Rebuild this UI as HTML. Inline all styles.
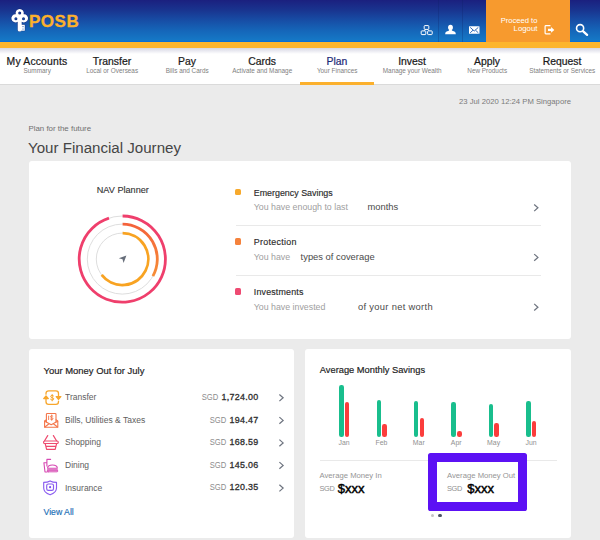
<!DOCTYPE html>
<html>
<head>
<meta charset="utf-8">
<title>POSB - Plan</title>
<style>
*{box-sizing:border-box;margin:0;padding:0}
html,body{width:600px;height:540px;overflow:hidden}
body{font-family:"Liberation Sans",sans-serif;background:#ebebeb;position:relative;color:#333}
.abs{position:absolute}
.t{position:absolute;white-space:nowrap;line-height:1}
svg{position:absolute;overflow:visible}
#hdr{left:0;top:0;width:600px;height:42px;background:linear-gradient(#1b207f 0%,#19348f 24%,#174da5 48%,#1565b8 72%,#1578c6 96%,#0b6ed6 98%,#0b6ed6 100%)}
#ybar{left:0;top:41.6px;width:600px;height:6px;background:#fdb52e}
#logout{left:486.4px;top:0;width:83.2px;height:41.5px;background:#f79a2e}
.hdiv{position:absolute;top:0;width:1px;height:41.5px;background:rgba(12,30,100,.25)}
#nav{left:0;top:47.5px;width:600px;height:36.6px;background:#fff;box-shadow:0 .8px .6px rgba(0,0,0,.07)}
#navsh{left:0;top:47.5px;width:600px;height:6px;background:linear-gradient(rgba(150,150,185,.38),rgba(255,255,255,0))}
#uline{left:300px;top:81.5px;width:74.4px;height:3.1px;background:#fbb02d}
.card{position:absolute;background:#fff;border-radius:3px}
.hr{position:absolute;height:1px;background:#e9e9e9}
.bul{position:absolute;width:5.6px;height:6.2px;border-radius:1.6px}
.bar{position:absolute;width:4.5px;border-radius:2.2px}
.g{background:#19be8d;width:4.4px}.r{background:#fb3d3c}
</style>
</head>
<body>
<div id="hdr" class="abs"></div>
<div id="ybar" class="abs"></div>
<div id="logout" class="abs"></div>
<div class="hdiv" style="left:438.2px"></div><div class="hdiv" style="left:461.8px"></div>
<svg id="key" style="left:0;top:0" width="90" height="42" viewBox="0 0 90 42">
<g fill="#fff" stroke="#121c66" stroke-width="1" stroke-opacity=".6" paint-order="stroke">
<path fill-rule="evenodd" d="M19.7 9a4.1 4.1 0 0 1 3.95 5.2a4.1 4.1 0 1 1 -1.95 7.5V24.7H24.8V30.7H21.7V30.2a2 1.2 0 0 1 -4 0V21.7a4.1 4.1 0 1 1 -1.95 -7.5a4.1 4.1 0 0 1 3.95 -5.2z
M19.7 11.5a1.5 1.5 0 1 0 0 3a1.5 1.5 0 1 0 0 -3z
M15.9 17.2a1.5 1.5 0 1 0 0 3a1.5 1.5 0 1 0 0 -3z
M23.5 17.2a1.5 1.5 0 1 0 0 3a1.5 1.5 0 1 0 0 -3z"/>
</g>
<circle cx="23" cy="26.6" r=".55" fill="#1651ad"/><circle cx="23" cy="29" r=".55" fill="#1459b4"/>
</svg>
<div class="t" style="top:12.91px;font-size:17.0px;color:#fbb02d;left:29.0px;font-weight:bold;-webkit-text-stroke:0.3px #fbb02d;letter-spacing:0.5px;">POSB</div>
<svg style="left:0;top:0" width="600" height="42" viewBox="0 0 600 42">
<g fill="none" stroke="#fff" stroke-width="1">
<rect x="424.2" y="25.6" width="4.6" height="3.8" rx=".7"/>
<rect x="421.2" y="30.9" width="4.6" height="3.7" rx=".7"/>
<rect x="427.6" y="30.9" width="4.6" height="3.7" rx=".7"/>
<path d="M425.4 29.4L424 30.9M427.6 29.4L429 30.9" stroke-width=".8"/>
</g>
<g fill="#fff">
<ellipse cx="450.5" cy="27.4" rx="2.4" ry="2.6"/>
<path d="M445.2 34.3C445.2 32.3 446 31.5 448 31C449 30.7 449.3 30.3 449.2 29.4h2.6C451.7 30.3 452 30.7 453 31C455 31.5 455.8 32.3 455.8 34.3z"/>
<rect x="469" y="26.3" width="10.5" height="7.5" rx=".5"/>
</g>
<g fill="none" stroke="#1859b0" stroke-width=".9">
<path d="M470.2 27.4L474.25 31L478.3 27.4M470.2 32.8L473 30.2M478.3 32.8L475.5 30.2"/>
</g>
<g fill="none" stroke="#fff" stroke-width="1.2">
<path d="M550 25.7H545.9A.8 .8 0 0 0 545.1 26.5V33.1A.8 .8 0 0 0 545.9 33.9H550" stroke-linecap="round"/>
</g>
<path fill="#fff" d="M548 28.8H551.1V27.1L554.3 29.9L551.1 32.7V31H548z"/>
<g fill="none" stroke="#fff">
<circle cx="580.1" cy="28.2" r="3.55" stroke-width="1.6"/>
<path d="M583.2 31.4L587.1 34.9" stroke-width="2.3" stroke-linecap="round"/>
</g>
</svg>
<div class="t" style="top:17.07px;font-size:7.6px;color:#fff;right:62.60000000000002px;">Proceed to</div>
<div class="t" style="top:25.10px;font-size:7.8px;color:#fff;right:62.60000000000002px;">Logout</div>
<div id="nav" class="abs"></div>
<div id="navsh" class="abs"></div>
<div id="uline" class="abs"></div>
<div class="t" style="top:56.60px;font-size:10.4px;color:#1a1a1a;left:-113.0px;width:300px;text-align:center;-webkit-text-stroke:0.22px #1a1a1a;letter-spacing:0.17px;">My Accounts</div>
<div class="t" style="top:68.28px;font-size:6.4px;color:#808080;left:-112.8px;width:300px;text-align:center;">Summary</div>
<div class="t" style="top:56.60px;font-size:10.4px;color:#1a1a1a;left:-38.0px;width:300px;text-align:center;-webkit-text-stroke:0.22px #1a1a1a;">Transfer</div>
<div class="t" style="top:68.28px;font-size:6.4px;color:#808080;left:-37.8px;width:300px;text-align:center;">Local or Overseas</div>
<div class="t" style="top:56.60px;font-size:10.4px;color:#1a1a1a;left:37.0px;width:300px;text-align:center;-webkit-text-stroke:0.22px #1a1a1a;">Pay</div>
<div class="t" style="top:68.28px;font-size:6.4px;color:#808080;left:37.19999999999999px;width:300px;text-align:center;">Bills and Cards</div>
<div class="t" style="top:56.60px;font-size:10.4px;color:#1a1a1a;left:112.0px;width:300px;text-align:center;-webkit-text-stroke:0.22px #1a1a1a;">Cards</div>
<div class="t" style="top:68.28px;font-size:6.4px;color:#808080;left:112.19999999999999px;width:300px;text-align:center;">Activate and Manage</div>
<div class="t" style="top:56.60px;font-size:10.4px;color:#1d2a78;left:187.0px;width:300px;text-align:center;-webkit-text-stroke:0.22px #1d2a78;">Plan</div>
<div class="t" style="top:68.28px;font-size:6.4px;color:#808080;left:187.2px;width:300px;text-align:center;">Your Finances</div>
<div class="t" style="top:56.60px;font-size:10.4px;color:#1a1a1a;left:262.0px;width:300px;text-align:center;-webkit-text-stroke:0.22px #1a1a1a;">Invest</div>
<div class="t" style="top:68.28px;font-size:6.4px;color:#808080;left:262.2px;width:300px;text-align:center;">Manage your Wealth</div>
<div class="t" style="top:56.60px;font-size:10.4px;color:#1a1a1a;left:337.0px;width:300px;text-align:center;-webkit-text-stroke:0.22px #1a1a1a;">Apply</div>
<div class="t" style="top:68.28px;font-size:6.4px;color:#808080;left:337.2px;width:300px;text-align:center;">New Products</div>
<div class="t" style="top:56.60px;font-size:10.4px;color:#1a1a1a;left:412.0px;width:300px;text-align:center;-webkit-text-stroke:0.22px #1a1a1a;">Request</div>
<div class="t" style="top:68.28px;font-size:6.4px;color:#808080;left:412.20000000000005px;width:300px;text-align:center;">Statements or Services</div>
<div class="t" style="top:98.48px;font-size:7.7px;color:#7a7a7a;right:29px;">23 Jul 2020 12:24 PM Singapore</div>
<div class="t" style="top:124.81px;font-size:7.9px;color:#707070;left:28.4px;">Plan for the future</div>
<div class="t" style="top:140.42px;font-size:15.1px;color:#454545;left:28px;">Your Financial Journey</div>
<div class="card" style="left:29px;top:161px;width:542px;height:178px"></div>
<div class="t" style="top:185.65px;font-size:9.15px;color:#333;left:-27.200000000000003px;width:300px;text-align:center;-webkit-text-stroke:0.12px #333;">NAV Planner</div>
<svg style="left:0;top:0" width="600" height="540" viewBox="0 0 600 540">
<defs><linearGradient id="mg" gradientUnits="userSpaceOnUse" x1="0" y1="-35" x2="0" y2="18"><stop offset="0" stop-color="#f4623b"/><stop offset="1" stop-color="#f68e36"/></linearGradient></defs>
<g fill="none" stroke-linecap="butt" transform="translate(122.3 259.1)">
<circle r="43.1" stroke="#dedede" stroke-width="1"/>
<circle r="35" stroke="#dedede" stroke-width="1"/>
<circle r="26" stroke="#dedede" stroke-width="1"/>
<path stroke="#ef3f6c" stroke-width="2.8" d="M0.3 -43.1A43.1 43.1 0 1 1 -13.32 -40.99"/>
<path stroke="url(#mg)" stroke-width="2.8" d="M0.3 -35A35 35 0 0 1 30.61 16.97"/>
<path stroke="#f8a322" stroke-width="2.8" d="M0.3 -26A26 26 0 1 1 -20.6 15.86"/>
</g>
<path fill="#676e7a" d="M126.4 255.5L118.8 258.3L122.5 259.3L123.6 262.9z"/>
</svg>
<div class="bul" style="left:235.3px;top:188.9px;background:#f7a92c"></div>
<div class="t" style="top:188.57px;font-size:8.9px;color:#2b2b2b;left:253.8px;-webkit-text-stroke:0.15px #2b2b2b;">Emergency Savings</div>
<div class="t" style="top:202.35px;font-size:8.8px;color:#a0a0a0;left:253.8px;"><span style="display:inline-block;width:113.7px">You have enough to last</span><span style="color:#4a4a4a;font-size:9.4px;letter-spacing:0px">months</span></div>
<div class="bul" style="left:235.3px;top:238.4px;background:#f5823c"></div>
<div class="t" style="top:238.07px;font-size:8.9px;color:#2b2b2b;left:253.8px;-webkit-text-stroke:0.15px #2b2b2b;letter-spacing:0.3px;">Protection</div>
<div class="t" style="top:251.85px;font-size:8.8px;color:#a0a0a0;left:253.8px;"><span style="display:inline-block;width:46.8px">You have</span><span style="color:#4a4a4a;font-size:9.4px;letter-spacing:0px">types of coverage</span></div>
<div class="bul" style="left:235.3px;top:288.4px;background:#ee4a72"></div>
<div class="t" style="top:288.07px;font-size:8.9px;color:#2b2b2b;left:253.8px;-webkit-text-stroke:0.15px #2b2b2b;letter-spacing:0.17px;">Investments</div>
<div class="t" style="top:301.85px;font-size:8.8px;color:#a0a0a0;left:253.8px;"><span style="display:inline-block;width:104.2px">You have invested</span><span style="color:#4a4a4a;font-size:9.4px;letter-spacing:0.3px">of your net worth</span></div>
<div class="hr" style="left:235.5px;top:224.6px;width:305.5px"></div><div class="hr" style="left:235.5px;top:274.6px;width:305.5px"></div>
<div class="card" style="left:29px;top:349px;width:265px;height:189px"></div>
<div class="t" style="top:366.20px;font-size:9.45px;color:#222;left:43.5px;-webkit-text-stroke:0.18px #222;">Your Money Out for July</div>
<div class="t" style="top:393.30px;font-size:8.5px;color:#606060;left:65px;transform:scaleY(1.16);transform-origin:0 84.65%;">Transfer</div>
<div class="t" style="top:392.97px;font-size:8.9px;color:#333;right:341.5px;"><span style="color:#8c8c8c;display:inline-block;transform:scaleX(.86);transform-origin:100% 50%;margin-right:1.1px">SGD</span> <span style="color:#2e2e2e;-webkit-text-stroke:.3px #2e2e2e;letter-spacing:.3px">1,724.00</span></div>
<div class="t" style="top:415.90px;font-size:8.5px;color:#606060;left:65px;transform:scaleY(1.16);transform-origin:0 84.65%;">Bills, Utilities &amp; Taxes</div>
<div class="t" style="top:415.57px;font-size:8.9px;color:#333;right:341.5px;"><span style="color:#8c8c8c;display:inline-block;transform:scaleX(.86);transform-origin:100% 50%;margin-right:1.1px">SGD</span> <span style="color:#2e2e2e;-webkit-text-stroke:.3px #2e2e2e;letter-spacing:.3px">194.47</span></div>
<div class="t" style="top:438.40px;font-size:8.5px;color:#606060;left:65px;transform:scaleY(1.16);transform-origin:0 84.65%;">Shopping</div>
<div class="t" style="top:438.07px;font-size:8.9px;color:#333;right:341.5px;"><span style="color:#8c8c8c;display:inline-block;transform:scaleX(.86);transform-origin:100% 50%;margin-right:1.1px">SGD</span> <span style="color:#2e2e2e;-webkit-text-stroke:.3px #2e2e2e;letter-spacing:.3px">168.59</span></div>
<div class="t" style="top:461.00px;font-size:8.5px;color:#606060;left:65px;transform:scaleY(1.16);transform-origin:0 84.65%;">Dining</div>
<div class="t" style="top:460.67px;font-size:8.9px;color:#333;right:341.5px;"><span style="color:#8c8c8c;display:inline-block;transform:scaleX(.86);transform-origin:100% 50%;margin-right:1.1px">SGD</span> <span style="color:#2e2e2e;-webkit-text-stroke:.3px #2e2e2e;letter-spacing:.3px">145.06</span></div>
<div class="t" style="top:483.60px;font-size:8.5px;color:#606060;left:65px;transform:scaleY(1.16);transform-origin:0 84.65%;">Insurance</div>
<div class="t" style="top:483.27px;font-size:8.9px;color:#333;right:341.5px;"><span style="color:#8c8c8c;display:inline-block;transform:scaleX(.86);transform-origin:100% 50%;margin-right:1.1px">SGD</span> <span style="color:#2e2e2e;-webkit-text-stroke:.3px #2e2e2e;letter-spacing:.3px">120.35</span></div>
<div class="t" style="top:508.24px;font-size:8.7px;color:#1a6eb6;left:43.5px;-webkit-text-stroke:0.15px #1a6eb6;">View All</div>
<div class="card" style="left:305px;top:349px;width:266px;height:189px"></div>
<div class="t" style="top:366.33px;font-size:9.3px;color:#222;left:319.8px;-webkit-text-stroke:0.18px #222;">Average Monthly Savings</div>
<div class="bar g" style="left:339.2px;top:384.9px;height:51.9px"></div><div class="bar r" style="left:344.8px;top:402.4px;height:34.4px"></div>
<div class="t" style="top:439.96px;font-size:6.9px;color:#909090;left:194.0px;width:300px;text-align:center;">Jan</div>
<div class="bar g" style="left:376.6px;top:399.8px;height:37.0px"></div><div class="bar r" style="left:382.2px;top:423.8px;height:13.0px"></div>
<div class="t" style="top:439.96px;font-size:6.9px;color:#909090;left:231.40000000000003px;width:300px;text-align:center;">Feb</div>
<div class="bar g" style="left:414.0px;top:401.2px;height:35.6px"></div><div class="bar r" style="left:419.6px;top:417.5px;height:19.3px"></div>
<div class="t" style="top:439.96px;font-size:6.9px;color:#909090;left:268.8px;width:300px;text-align:center;">Mar</div>
<div class="bar g" style="left:451.4px;top:402.4px;height:34.4px"></div><div class="bar r" style="left:457.0px;top:431.0px;height:5.8px"></div>
<div class="t" style="top:439.96px;font-size:6.9px;color:#909090;left:306.2px;width:300px;text-align:center;">Apr</div>
<div class="bar g" style="left:488.8px;top:403.6px;height:33.2px"></div><div class="bar r" style="left:494.4px;top:423.4px;height:13.4px"></div>
<div class="t" style="top:439.96px;font-size:6.9px;color:#909090;left:343.6px;width:300px;text-align:center;">May</div>
<div class="bar g" style="left:526.2px;top:401.2px;height:35.6px"></div><div class="bar r" style="left:531.8px;top:421.0px;height:15.8px"></div>
<div class="t" style="top:439.96px;font-size:6.9px;color:#909090;left:381.0px;width:300px;text-align:center;">Jun</div>
<div class="hr" style="left:319.5px;top:459.8px;width:237.5px"></div>
<div class="t" style="top:471.98px;font-size:7.7px;color:#959595;left:319.5px;">Average Money In</div>
<div class="t" style="top:484.74px;font-size:7.4px;color:#909090;left:319.5px;letter-spacing:-0.35px;">SGD</div>
<div class="t" style="top:481.60px;font-size:13px;color:#000;left:337.8px;-webkit-text-stroke:0.45px #000;">$xxx</div>
<div class="abs" style="left:428.3px;top:453.3px;width:99.2px;height:57.7px;border:9.2px solid #5c11f4;border-radius:2.6px;background:#fff"></div>
<div class="t" style="top:471.98px;font-size:7.7px;color:#959595;left:447px;">Average Money Out</div>
<div class="t" style="top:484.74px;font-size:7.4px;color:#909090;left:447px;letter-spacing:-0.35px;">SGD</div>
<div class="t" style="top:481.60px;font-size:13px;color:#000;left:467.2px;-webkit-text-stroke:0.45px #000;">$xxx</div>
<div class="abs" style="left:430.9px;top:514.1px;width:3.4px;height:3.4px;border-radius:50%;background:#c4c4c4"></div><div class="abs" style="left:438.3px;top:514.1px;width:3.4px;height:3.4px;border-radius:50%;background:#4a5362"></div>
<svg style="left:0;top:0" width="600" height="540" viewBox="0 0 600 540"><g fill="none" stroke="#6f7580" stroke-width="1.25"><path d="M534.2 204.5L537.9 207.8L534.2 211.1"/><path d="M534.2 254.1L537.9 257.4L534.2 260.7"/><path d="M534.2 303.9L537.9 307.2L534.2 310.5"/><path d="M279.4 394.5L283.1 397.8L279.4 401.1"/><path d="M279.4 417.1L283.1 420.4L279.4 423.7"/><path d="M279.4 439.6L283.1 442.9L279.4 446.2"/><path d="M279.4 462.1L283.1 465.4L279.4 468.7"/><path d="M279.4 484.8L283.1 488.1L279.4 491.4"/></g>
<g fill="none" stroke="#f7a62c" stroke-width="1.3" stroke-linecap="round" stroke-linejoin="round">
<path d="M46 394.2V393.4A2.6 2.6 0 0 1 48.6 390.8H55.9A2.6 2.6 0 0 1 58.5 393.4V398.6"/>
<path d="M56.2 396.6L58.5 399.2L60.8 396.6z" fill="#f7a62c"/>
<path d="M58.5 401.2V401.8A2.6 2.6 0 0 1 55.9 404.4H48.6A2.6 2.6 0 0 1 46 401.8V396.6"/>
<path d="M43.7 398.6L46 396L48.3 398.6z" fill="#f7a62c"/>
<path d="M53.6 395.9C53 395.1 50.6 395 50.6 396.5C50.6 398 53.8 397.3 53.8 398.9C53.8 400.4 51.2 400.3 50.5 399.3M52.2 394.5V400.9" stroke-width="1"/>
</g>
<g fill="none" stroke="#f4764a" stroke-width="1.1" stroke-linecap="round" stroke-linejoin="round">
<path d="M46.4 419.8L44.6 421V427.3H57.8V421L56 419.8"/>
<path d="M46.4 422V414.4A.9 .9 0 0 1 47.3 413.5H55.1A.9 .9 0 0 1 56 414.4V422"/>
<path d="M44.8 421.2L51.2 424.8L57.6 421.2M44.9 427L49 423.8M57.5 427L53.4 423.8"/>
<path d="M52.9 416.2C52.4 415.5 50.4 415.5 50.4 416.7C50.4 417.9 53 417.4 53 418.7C53 419.9 50.8 419.8 50.3 419M51.7 415V420.3M48.6 416V419.6" stroke-width=".9"/>
</g>
<g fill="none" stroke="#ee4a6e" stroke-width="1.2" stroke-linecap="round" stroke-linejoin="round">
<path d="M47.7 435.6L44.6 440.8M53.4 435.6L56.5 440.8"/>
<rect x="43.6" y="441" width="14.6" height="2.5" rx="1.1"/>
<path d="M45.2 443.6L46.6 449.3H55.2L56.6 443.6M46 446.4H55.8"/>
</g>
<g fill="none" stroke="#d648b2" stroke-width="1.1" stroke-linecap="round" stroke-linejoin="round">
<path d="M43.9 462.8L45 472H46.6M43.9 462.8H46.8M46.9 466V459.4H50.6"/>
<path d="M47.6 468.2C47.6 463.9 57.3 463.9 57.3 468.2z"/>
<path d="M47.4 469.9H57.5M48 471.8H57A.8 .8 0 0 0 57 470.2H48A.8 .8 0 0 0 48 471.8z" stroke-width="1"/>
</g>
<g fill="none" stroke="#8a5cf0" stroke-width="1.15" stroke-linecap="round" stroke-linejoin="round">
<path d="M50.1 480.9C52 482 54.5 482.4 56.5 482.4V488C56.5 491.6 53 493.8 50.1 494.8C47.2 493.8 43.7 491.6 43.7 488V482.4C45.7 482.4 48.2 482 50.1 480.9z"/>
<rect x="46.7" y="484" width="6.8" height="6.4" rx="1.6"/>
</g><circle cx="50.1" cy="487.2" r="1.1" fill="#7c4ff0"/>
</svg>
</body>
</html>
